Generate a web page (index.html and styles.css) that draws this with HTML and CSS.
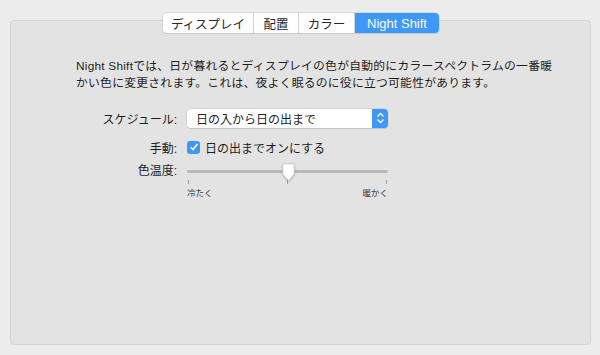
FILE: index.html
```html
<!DOCTYPE html>
<html lang="ja">
<head>
<meta charset="UTF-8">
<title>Night Shift</title>
<link rel="stylesheet" href="styles.css">
</head>
<body>
<div class="window">
    <!-- Tabs -->
    <div class="tabs">
        <span class="tab t1">ディスプレイ</span>
        <span class="tab t2">配置</span>
        <span class="tab t3">カラー</span>
        <span class="tab t4 selected">Night Shift</span>
    </div>

    <div class="panel">
        <p class="intro">Night Shiftでは、日が暮れるとディスプレイの色が自動的にカラースペクトラムの一番暖<br>かい色に変更されます。これは、夜よく眠るのに役に立つ可能性があります。</p>

        <div class="form">
            <div class="row row-schedule">
                <span class="label">スケジュール:</span>
                <div class="popup">
                    <span class="popup-text">日の入から日の出まで</span>
                    <span class="stepper">
                        <svg width="9" height="12" viewBox="0 0 9 12"><path d="M1.5 4.5 L4.5 1.5 L7.5 4.5 M1.5 7.5 L4.5 10.5 L7.5 7.5" fill="none" stroke="#fff" stroke-width="1.4"/></svg>
                    </span>
                </div>
            </div>
            <div class="row row-manual">
                <span class="label">手動:</span>
                <span class="checkbox">
                    <svg width="10" height="10" viewBox="0 0 10 10"><path d="M1.8 5.2 L4 7.6 L8.4 2" fill="none" stroke="#fff" stroke-width="1.6"/></svg>
                </span>
                <span class="check-label">日の出までオンにする</span>
            </div>
            <div class="row slider-row">
                <span class="label">色温度:</span>
                <div class="slider">
                    <div class="track"></div>
                    <div class="thumb">
                        <svg width="13" height="19" viewBox="0 0 13 19"><path d="M1.8 0.8 H11.2 Q12.2 0.8 12.2 1.8 V11 L6.5 17.8 L0.8 11 V1.8 Q0.8 0.8 1.8 0.8 Z" fill="#fff" stroke="#c2c2c2" stroke-width="0.8"/></svg>
                    </div>
                    <div class="ticks">
                        <span class="tick"></span>
                        <span class="tick"></span>
                        <span class="tick"></span>
                    </div>
                    <div class="ends">
                        <span>冷たく</span>
                        <span>暖かく</span>
                    </div>
                </div>
            </div>
        </div>
    </div>
</div>
</body>
</html>
```

FILE: styles.css
```css
/* Basic Styles */
body {
    margin: 0;
    padding: 0;
    background-color: #ececec;
    font-family: "Liberation Sans", "Noto Sans CJK JP", sans-serif;
    color: #1e1e1e;
}
.window {
    position: relative;
    width: 600px;
    height: 355px;
    padding: 20px 9px 10px 10px;
    box-sizing: border-box;
}
/* Tabs */
.tabs {
    position: absolute;
    top: 13px;
    left: 163px;
    display: flex;
    height: 20px;
    background-color: #fff;
    border-radius: 4px;
    box-shadow: 0 0 0 0.5px #c8c8c8, 0 1px 1px rgba(0, 0, 0, 0.12);
    z-index: 2;
}
.tab {
    display: flex;
    align-items: center;
    justify-content: center;
    font-size: 12.5px;
    color: #262626;
    border-right: 1px solid #d4d4d4;
}
.t1 { width: 90px; }
.t2 { width: 44px; }
.t3 { width: 55px; }
.t4 { width: 84px; border-right: none; }
.tab.selected {
    background-color: #3d98f8;
    color: #fff;
    border-radius: 0 4px 4px 0;
    font-size: 13px;
}
/* Panel */
.panel {
    height: 100%;
    box-sizing: border-box;
    background-color: #e3e3e3;
    border: 1px solid #d3d3d3;
    border-radius: 4px;
    padding: 37px 20px 0 65px;
}
.intro {
    margin: 0;
    font-size: 11.8px;
    line-height: 17px;
    letter-spacing: 0.25px;
    white-space: nowrap;
}
.form {
    margin-top: 16px;
    display: flex;
    flex-direction: column;
}
.row {
    display: flex;
    align-items: center;
}
.row-schedule { height: 20px; }
.row-manual { height: 20px; margin-top: 9px; }
.slider-row { margin-top: 6px; align-items: flex-start; }
.label {
    width: 111px;
    padding-right: 10px;
    text-align: right;
    font-size: 12px;
    box-sizing: border-box;
}
/* Popup button */
.popup {
    width: 201px;
    height: 19px;
    background-color: #fff;
    border-radius: 4px;
    box-shadow: 0 0 0 0.5px #c4c4c4, 0 1px 1px rgba(0, 0, 0, 0.15);
    display: flex;
    align-items: center;
    justify-content: space-between;
    box-sizing: border-box;
    padding-left: 9px;
}
.popup-text {
    font-size: 12px;
}
.stepper {
    width: 16px;
    height: 19px;
    background-color: #3d98f8;
    border-radius: 0 4px 4px 0;
    display: flex;
    align-items: center;
    justify-content: center;
}
/* Checkbox */
.checkbox {
    width: 13px;
    height: 13px;
    border-radius: 3px;
    background-color: #3d98f8;
    display: flex;
    align-items: center;
    justify-content: center;
    margin-right: 5px;
}
.check-label {
    font-size: 12px;
}
/* Slider */
.slider-row .label {
    line-height: 16px;
}
.slider {
    position: relative;
    width: 201px;
    padding-top: 7px;
}
.track {
    height: 3px;
    border-radius: 2px;
    background-color: #b9b9b9;
}
.thumb {
    position: absolute;
    top: 0;
    left: 95px;
    filter: drop-shadow(0 1px 1px rgba(0, 0, 0, 0.2));
}
.ticks {
    display: flex;
    justify-content: space-between;
    padding: 0 1px;
    margin-top: 7px;
}
.tick {
    width: 1px;
    height: 4px;
    background-color: #9c9c9c;
}
.ends {
    display: flex;
    justify-content: space-between;
    font-size: 8.5px;
    margin-top: 2px;
    color: #333;
}
```
